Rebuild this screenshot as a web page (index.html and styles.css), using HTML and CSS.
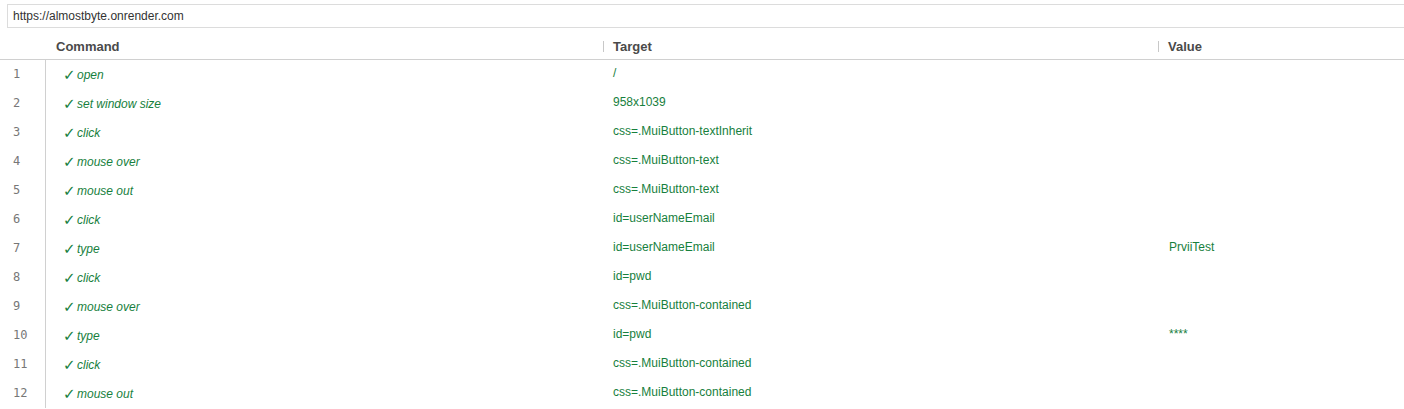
FILE: index.html
```html
<!DOCTYPE html>
<html>
<head>
<meta charset="utf-8">
<link rel="stylesheet" href="styles.css">
</head>
<body>
<div class="url">https://almostbyte.onrender.com</div>
<div class="table">
  <div class="head">
    <div class="hc num"></div>
    <div class="hc first">Command</div>
    <div class="hc"><span class="sep"></span>Target</div>
    <div class="hc"><span class="sep"></span>Value</div>
  </div>
  <div class="body">
    <div class="row"><div class="num">1</div><div class="cmd"><span class="ok">✓</span>open</div><div class="val">/</div><div class="val"></div></div>
    <div class="row"><div class="num">2</div><div class="cmd"><span class="ok">✓</span>set window size</div><div class="val">958x1039</div><div class="val"></div></div>
    <div class="row"><div class="num">3</div><div class="cmd"><span class="ok">✓</span>click</div><div class="val">css=.MuiButton-textInherit</div><div class="val"></div></div>
    <div class="row"><div class="num">4</div><div class="cmd"><span class="ok">✓</span>mouse over</div><div class="val">css=.MuiButton-text</div><div class="val"></div></div>
    <div class="row"><div class="num">5</div><div class="cmd"><span class="ok">✓</span>mouse out</div><div class="val">css=.MuiButton-text</div><div class="val"></div></div>
    <div class="row"><div class="num">6</div><div class="cmd"><span class="ok">✓</span>click</div><div class="val">id=userNameEmail</div><div class="val"></div></div>
    <div class="row"><div class="num">7</div><div class="cmd"><span class="ok">✓</span>type</div><div class="val">id=userNameEmail</div><div class="val">PrviiTest</div></div>
    <div class="row"><div class="num">8</div><div class="cmd"><span class="ok">✓</span>click</div><div class="val">id=pwd</div><div class="val"></div></div>
    <div class="row"><div class="num">9</div><div class="cmd"><span class="ok">✓</span>mouse over</div><div class="val">css=.MuiButton-contained</div><div class="val"></div></div>
    <div class="row"><div class="num">10</div><div class="cmd"><span class="ok">✓</span>type</div><div class="val">id=pwd</div><div class="val">****</div></div>
    <div class="row"><div class="num">11</div><div class="cmd"><span class="ok">✓</span>click</div><div class="val">css=.MuiButton-contained</div><div class="val"></div></div>
    <div class="row"><div class="num">12</div><div class="cmd"><span class="ok">✓</span>mouse out</div><div class="val">css=.MuiButton-contained</div><div class="val"></div></div>
  </div>
</div>
</body>
</html>
```
FILE: styles.css
```css
html, body {
  margin: 0;
  padding: 0;
  background: #fff;
  overflow: hidden;
}
body {
  font-family: "Liberation Sans", Arial, sans-serif;
  font-size: 12px;
  width: 1404px;
  height: 409px;
}
.url {
  margin: 4px -20px 0 7px;
  height: 22px;
  border: 1px solid #dcdcdc;
  padding-left: 5px;
  line-height: 22px;
  font-size: 12px;
  color: #333;
}
.head, .row {
  display: grid;
  grid-template-columns: 46px 557px 555px 1fr;
}
.head {
  height: 31px;
  border-bottom: 1px solid #d0d0d0;
}
.hc {
  display: flex;
  align-items: center;
  font-weight: bold;
  font-size: 13px;
  color: #4a4a4a;
  padding-top: 6px;
}
.hc.first {
  padding-left: 10px;
}
.sep {
  width: 1px;
  height: 11px;
  background: #c8c8c8;
  margin-right: 9px;
}
.row {
  height: 29px;
  align-items: center;
}
.row .num {
  height: 29px;
  border-right: 1px solid #d0d0d0;
  box-sizing: border-box;
  font-family: "DejaVu Sans Mono", monospace;
  font-size: 12px;
  color: #777;
  display: flex;
  align-items: center;
  padding-left: 13px;
  padding-bottom: 1px;
}
.cmd {
  font-style: italic;
  color: #17803d;
  padding-left: 17px;
  display: flex;
  align-items: center;
}
.ok {
  font-style: normal;
  font-family: "DejaVu Sans", sans-serif;
  font-size: 15px;
  line-height: 14px;
  color: #17803d;
  width: 14px;
}
.val {
  color: #17803d;
  padding-left: 10px;
  padding-bottom: 4px;
}
.row .val:last-child {
  padding-left: 11px;
}
```
